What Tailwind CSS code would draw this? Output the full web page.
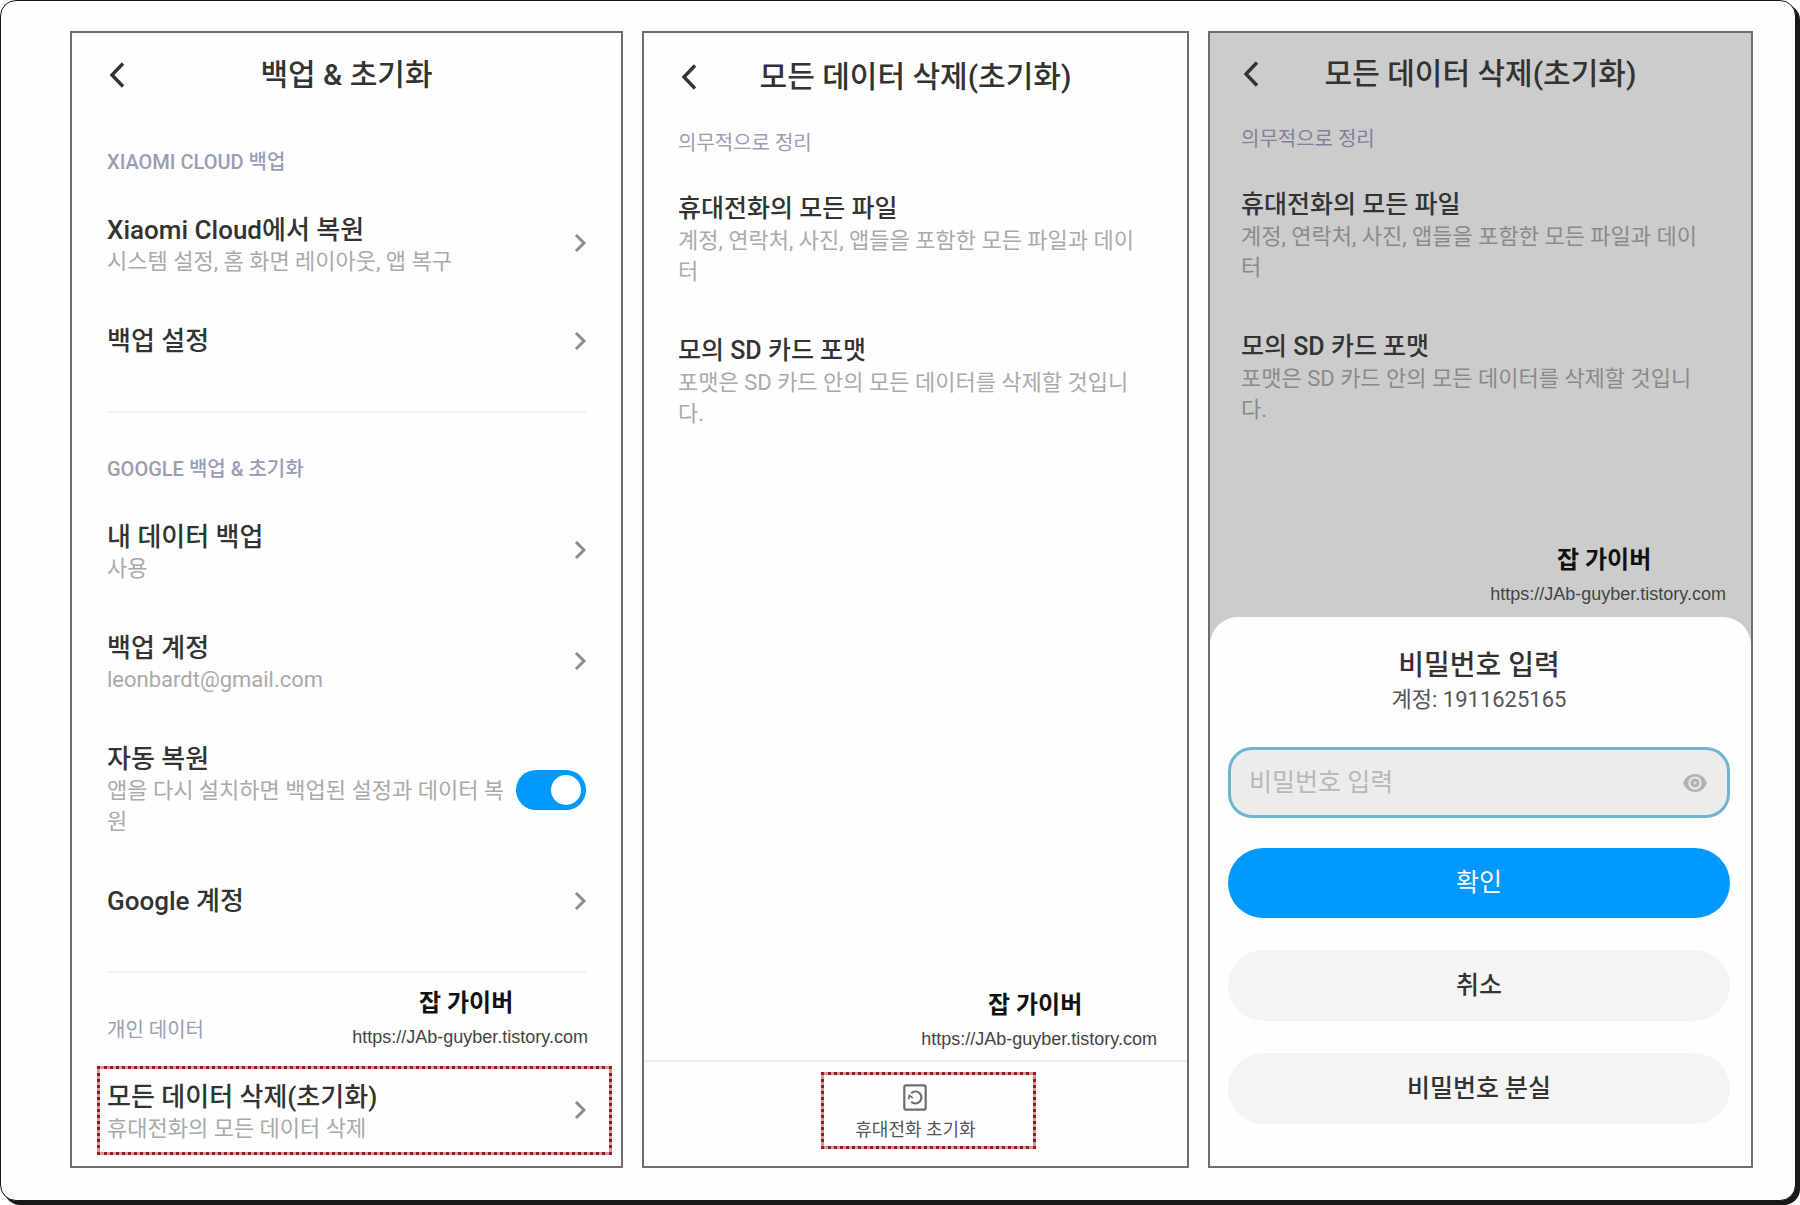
<!DOCTYPE html>
<html lang="ko">
<head>
  <meta charset="UTF-8">
  <meta name="viewport" content="width=device-width, initial-scale=1.0">
  <title>백업 & 초기화</title>
  <script src="https://cdn.jsdelivr.net/npm/@tailwindcss/browser@4"></script>
</head>
<body class="min-h-screen bg-white pr-1 pb-1 flex font-['Roboto','Noto_Sans_CJK_KR',sans-serif] text-[#333333]">
  <main class="flex-1 grid grid-cols-[553fr_547fr_545fr] gap-[19px] rounded-2xl border border-[#18181b] bg-[#fefefe] shadow-[4px_4px_0_#18181b] pt-[30px] pr-[42px] pb-8 pl-[69px]">

    <!-- Backup & reset -->
    <section class="flex flex-col border-2 border-[#6e6e6e] px-[35px]">
      <header class="grid grid-cols-[24px_1fr_24px] items-center h-[84px]">
        <button type="button" aria-label="뒤로" class="flex pl-0.5">
          <svg class="w-4 h-[26px]" viewBox="0 0 16 26" fill="none" stroke="#333333" stroke-width="3.4"><path d="M14 1.5 3 13l11 11.5"/></svg>
        </button>
        <h1 class="text-center text-[30px] leading-10 font-medium">백업 &amp; 초기화</h1>
      </header>

      <h2 class="mt-[31px] mb-3 text-xl leading-7 font-medium text-[#9a9db3]">XIAOMI CLOUD 백업</h2>
      <a href="#" class="flex items-center justify-between pt-[26px] pb-[22px]">
        <span class="flex flex-col">
          <span class="text-[26px] leading-8 font-medium">Xiaomi Cloud에서 복원</span>
          <span class="text-[22px] leading-[31px] text-[#aaaaaa]">시스템 설정, 홈 화면 레이아웃, 앱 복구</span>
        </span>
        <svg class="mb-1.5 w-3 h-5" viewBox="0 0 12 20" fill="none" stroke="#8c8c8c" stroke-width="3"><path d="M2 2l8 8-8 8"/></svg>
      </a>
      <a href="#" class="flex items-center justify-between pt-[26px] pb-[22px]">
        <span class="text-[26px] leading-8 font-medium">백업 설정</span>
        <svg class="w-3 h-5" viewBox="0 0 12 20" fill="none" stroke="#8c8c8c" stroke-width="3"><path d="M2 2l8 8-8 8"/></svg>
      </a>
      <hr class="mt-8 border-t-2 border-[#f0f0f0]">

      <h2 class="mt-[42px] mb-3 text-xl leading-7 font-medium text-[#9a9db3]">GOOGLE 백업 &amp; 초기화</h2>
      <a href="#" class="flex items-center justify-between pt-[26px] pb-[22px]">
        <span class="flex flex-col">
          <span class="text-[26px] leading-8 font-medium">내 데이터 백업</span>
          <span class="text-[22px] leading-[31px] text-[#aaaaaa]">사용</span>
        </span>
        <svg class="mb-1.5 w-3 h-5" viewBox="0 0 12 20" fill="none" stroke="#8c8c8c" stroke-width="3"><path d="M2 2l8 8-8 8"/></svg>
      </a>
      <a href="#" class="flex items-center justify-between pt-[26px] pb-[22px]">
        <span class="flex flex-col">
          <span class="text-[26px] leading-8 font-medium">백업 계정</span>
          <span class="text-[22px] leading-[31px] text-[#aaaaaa]">leonbardt@gmail.com</span>
        </span>
        <svg class="mb-1.5 w-3 h-5" viewBox="0 0 12 20" fill="none" stroke="#8c8c8c" stroke-width="3"><path d="M2 2l8 8-8 8"/></svg>
      </a>
      <label for="auto-restore" class="flex items-center justify-between gap-2 pt-[26px] pb-[22px]">
        <span class="flex flex-col">
          <span class="text-[26px] leading-8 font-medium">자동 복원</span>
          <span class="text-[22px] leading-[31px] text-[#aaaaaa] break-all">앱을 다시 설치하면 백업된 설정과 데이터 복원</span>
        </span>
        <input id="auto-restore" type="checkbox" role="switch" checked class="appearance-none shrink-0 flex items-center w-[70px] h-10 rounded-full bg-[#c8c8c8] px-[5px] checked:bg-[#0099ff] checked:justify-end before:block before:size-[30px] before:rounded-full before:bg-white">
      </label>
      <a href="#" class="flex items-center justify-between pt-[26px] pb-[22px]">
        <span class="text-[26px] leading-8 font-medium">Google 계정</span>
        <svg class="w-3 h-5" viewBox="0 0 12 20" fill="none" stroke="#8c8c8c" stroke-width="3"><path d="M2 2l8 8-8 8"/></svg>
      </a>
      <hr class="mt-8 border-t-2 border-[#f0f0f0]">

      <div class="flex items-start justify-between pt-[13px]">
        <h2 class="pt-[30px] text-xl leading-7 text-[#9a9db3]">개인 데이터</h2>
        <div class="-mr-0.5 text-center">
          <p class="pr-2 text-2xl leading-[34px] font-bold text-[#111111]">잡 가이버</p>
          <p class="font-['Liberation_Sans',sans-serif] text-lg leading-[34px] text-[#444444]">https://JAb-guyber.tistory.com</p>
        </div>
      </div>
      <a href="#" class="mt-3 -ml-2.5 -mr-[26px] flex items-center justify-between border-[3px] border-[#dc9494] outline-[3px] outline-dotted outline-[#8f1d22] -outline-offset-[3px] pt-3 pb-2 pr-[23px] pl-[7px]">
        <span class="flex flex-col">
          <span class="text-[26px] leading-8 font-medium">모든 데이터 삭제(초기화)</span>
          <span class="text-[22px] leading-[31px] text-[#aaaaaa]">휴대전화의 모든 데이터 삭제</span>
        </span>
        <svg class="mb-1.5 w-3 h-5" viewBox="0 0 12 20" fill="none" stroke="#8c8c8c" stroke-width="3"><path d="M2 2l8 8-8 8"/></svg>
      </a>
    </section>

    <!-- Erase all data -->
    <section class="flex flex-col border-2 border-[#6e6e6e]">
      <header class="grid grid-cols-[24px_1fr_24px] items-center h-[88px] px-[35px]">
        <button type="button" aria-label="뒤로" class="flex pl-0.5">
          <svg class="w-4 h-[26px]" viewBox="0 0 16 26" fill="none" stroke="#333333" stroke-width="3.4"><path d="M14 1.5 3 13l11 11.5"/></svg>
        </button>
        <h1 class="text-center text-[30px] leading-10 font-medium">모든 데이터 삭제(초기화)</h1>
      </header>
      <div class="pl-[34px] pr-[46px]">
        <h2 class="mt-2 mb-2.5 text-xl leading-7 text-[#9a9db3]">의무적으로 정리</h2>
        <div class="pt-[26px] pb-[22px]">
          <h3 class="text-[25px] leading-8 font-medium">휴대전화의 모든 파일</h3>
          <p class="text-[22px] leading-[31px] text-[#aaaaaa] break-all">계정, 연락처, 사진, 앱들을 포함한 모든 파일과 데이터</p>
        </div>
        <div class="pt-[26px] pb-[22px]">
          <h3 class="text-[25px] leading-8 font-medium">모의 SD 카드 포맷</h3>
          <p class="text-[22px] leading-[31px] text-[#aaaaaa] break-all">포맷은 SD 카드 안의 모든 데이터를 삭제할 것입니다.</p>
        </div>
      </div>
      <div class="mt-auto mr-[30px] mb-1 self-end text-center">
        <p class="pr-2 text-2xl leading-[34px] font-bold text-[#111111]">잡 가이버</p>
        <p class="font-['Liberation_Sans',sans-serif] text-lg leading-[34px] text-[#444444]">https://JAb-guyber.tistory.com</p>
      </div>
      <footer class="flex justify-center border-t-2 border-[#ececec] pt-[22px] pb-[21px]">
        <button type="button" class="relative flex flex-col items-center gap-1">
          <svg class="w-6 h-[27px]" viewBox="0 0 24 27" fill="none" stroke="#6e6e6e" stroke-width="2.2">
            <rect x="1.3" y="1.3" width="21.4" height="24.4" rx="2"/>
            <path d="M8.2 9.2A6 6 0 1 1 8.2 17.8"/>
            <path d="M5.6 15.4l.8-4 3.4 2.6" stroke-width="1.6"/>
          </svg>
          <span class="text-lg leading-[30px] text-[#555555]">휴대전화 초기화</span>
          <span class="absolute -top-3 -bottom-1 -left-[34px] -right-[60px] border-[3px] border-[#dc9494] outline-[3px] outline-dotted outline-[#8f1d22] -outline-offset-[3px]"></span>
        </button>
      </footer>
    </section>

    <!-- Password prompt over the dimmed page -->
    <section class="flex flex-col border-2 border-[#6e6e6e] bg-[#cccccc]">
      <header class="grid grid-cols-[24px_1fr_24px] items-center h-[82px] px-[31px]">
        <button type="button" aria-label="뒤로" class="flex pl-0.5">
          <svg class="w-4 h-[26px]" viewBox="0 0 16 26" fill="none" stroke="#333333" stroke-width="3.4"><path d="M14 1.5 3 13l11 11.5"/></svg>
        </button>
        <h1 class="text-center text-[30px] leading-10 font-medium">모든 데이터 삭제(초기화)</h1>
      </header>
      <div class="pl-[31px] pr-[46px]">
        <h2 class="my-2.5 text-xl leading-7 text-[#80829a]">의무적으로 정리</h2>
        <div class="pt-[26px] pb-[22px]">
          <h3 class="text-[25px] leading-8 font-medium">휴대전화의 모든 파일</h3>
          <p class="text-[22px] leading-[31px] text-[#8a8a8a] break-all">계정, 연락처, 사진, 앱들을 포함한 모든 파일과 데이터</p>
        </div>
        <div class="pt-[26px] pb-[22px]">
          <h3 class="text-[25px] leading-8 font-medium">모의 SD 카드 포맷</h3>
          <p class="text-[22px] leading-[31px] text-[#8a8a8a] break-all">포맷은 SD 카드 안의 모든 데이터를 삭제할 것입니다.</p>
        </div>
      </div>
      <div class="mt-auto mr-[25px] mb-1.5 self-end text-center">
        <p class="pr-2 text-2xl leading-[34px] font-bold text-[#111111]">잡 가이버</p>
        <p class="font-['Liberation_Sans',sans-serif] text-lg leading-[34px] text-[#444444]">https://JAb-guyber.tistory.com</p>
      </div>
      <form class="flex flex-col rounded-t-[28px] bg-[#fefefe] pl-[18px] pr-[21px] pt-[31px] pb-[42px]">
        <h2 class="text-center text-[28px] leading-9 font-medium">비밀번호 입력</h2>
        <p class="text-center text-[22px] leading-[31px] text-[#555555]">계정: 1911625165</p>
        <div class="mt-8 flex items-center h-[71px] rounded-3xl border-[3px] border-[#6fb4d3] bg-[#ececec] pl-[18px] pr-5">
          <input id="password" type="password" aria-label="비밀번호 입력" placeholder="비밀번호 입력" class="flex-1 min-w-0 bg-transparent text-[25px] leading-8 outline-none placeholder:text-[#b8b8b8]">
          <button type="button" aria-label="비밀번호 표시">
            <svg class="w-6 h-5" viewBox="0 0 24 20">
              <path d="M0 10C2.5 4 6.8 1 12 1s9.5 3 12 9c-2.5 6-6.8 9-12 9S2.5 16 0 10z" fill="#b2b2b2"/>
              <circle cx="12" cy="10" r="5.6" fill="#b2b2b2" stroke="#ececec" stroke-width="2"/>
              <circle cx="12" cy="10" r="1.6" fill="#dcdcdc"/>
            </svg>
          </button>
        </div>
        <div class="mt-[30px] flex flex-col gap-8">
          <button type="submit" class="h-[70px] rounded-full bg-[#0099ff] text-[25px] leading-8 text-white">확인</button>
          <button type="button" class="h-[71px] rounded-full bg-[#f4f4f4] text-[25px] leading-8 font-medium">취소</button>
          <button type="button" class="h-[71px] rounded-full bg-[#f4f4f4] text-[25px] leading-8 font-medium">비밀번호 분실</button>
        </div>
      </form>
    </section>

  </main>
</body>
</html>
